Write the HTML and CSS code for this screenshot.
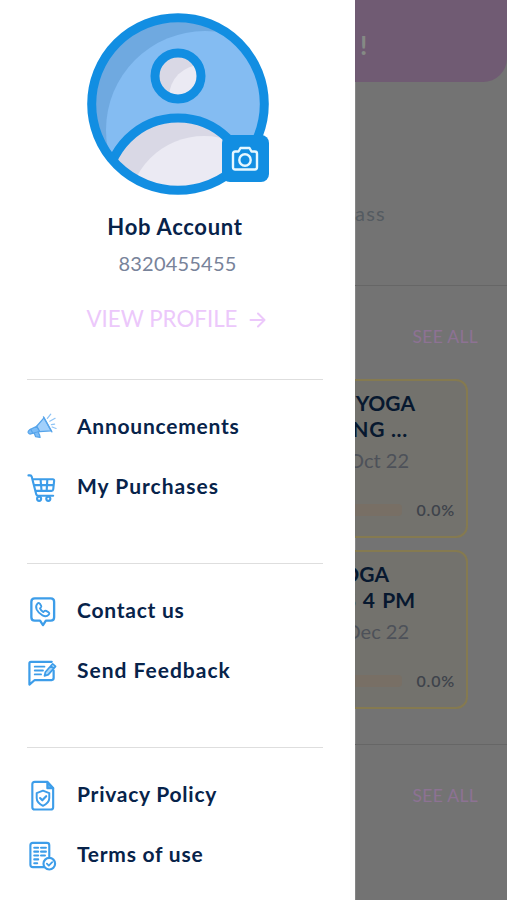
FILE: index.html
```html
<!DOCTYPE html>
<html lang="en">
<head>
<meta charset="utf-8">
<title>Account menu</title>
<link rel="stylesheet" href="styles.css">
</head>
<body>
<div class="screen">
  <aside class="drawer">
    <div class="avatar">
      <svg width="182" height="182" viewBox="0 0 182 182">
        <defs>
          <clipPath id="face"><circle cx="91" cy="91" r="88"/></clipPath>
          <clipPath id="head"><circle cx="91" cy="63" r="20"/></clipPath>
          <clipPath id="body"><circle cx="91" cy="176" r="71"/></clipPath>
        </defs>
        <g clip-path="url(#face)">
          <circle cx="91" cy="91" r="88" fill="#6fa9e0"/>
          <circle cx="118" cy="117" r="99" fill="#84bcf2"/>
          <circle cx="91" cy="176" r="71" fill="#d9d8e5"/>
          <circle cx="117" cy="199" r="76" fill="#ebeaf3" clip-path="url(#body)"/>
          <circle cx="91" cy="176" r="71" fill="none" stroke="#128ee2" stroke-width="9"/>
        </g>
        <circle cx="91" cy="63" r="22" fill="#d9d8e5"/>
        <circle cx="114" cy="84" r="32" fill="#ebeaf3" clip-path="url(#head)"/>
        <circle cx="91" cy="63" r="23" fill="none" stroke="#128ee2" stroke-width="9"/>
        <circle cx="91" cy="91" r="86.3" fill="none" stroke="#128ee2" stroke-width="9"/>
      </svg>
      <span class="camera">
        <svg width="28" height="26" viewBox="0 0 28 26" fill="none" stroke="#e6f7ff" stroke-width="2.400" stroke-linejoin="round">
          <path d="M4.200 5.500H7.500L9.500 2h9l2 3.500h3.300q2.200 0 2.200 2.200v13.600q0 2.200-2.200 2.200H4.200Q2 23.500 2 21.300V7.700Q2 5.500 4.200 5.500z"/>
          <circle cx="14" cy="14" r="5.700"/>
        </svg>
      </span>
    </div>
    <h1 class="name">Hob Account</h1>
    <p class="phone">8320455455</p>
    <a class="profile"><span>VIEW PROFILE</span>
      <svg width="17" height="16" viewBox="0 0 17 16" fill="none" stroke="#ecc8fb" stroke-width="2" stroke-linecap="round" stroke-linejoin="round"><path d="M1.500 8h14M9 1.500 15.500 8 9 14.500"/></svg>
    </a>
    <nav>
      <ul class="group">
        <li class="item">
          <svg class="icon" viewBox="0 0 32 32" fill="none" stroke="#56a4ea" stroke-width="1.300" stroke-linejoin="round" stroke-linecap="round">
            <path d="M17.500 6 25 19.500l-12 .7-3-5.500z" fill="#a2d0fb"/>
            <path d="m10 14.700-7.500 3.800q-2 1.500-1 3.200 1 1.600 3.200.7l8.300-2.200z" fill="#7bbcf7"/>
            <path d="m7.500 22 1.300 3.300 4.700 1-.5-2.500-1.500-3" fill="#7bbcf7"/>
            <path d="M17 5l8.700 15.500M4 18l2 4"/>
            <path d="m21 6.500 3.500-4.300M23.500 9.500l5.500-3M25.200 13l3.300-.5M26 15.500l4 1.500" stroke="#8fc4f6"/>
          </svg>
          <span>Announcements</span>
        </li>
        <li class="item">
          <svg class="icon" viewBox="0 0 32 32" fill="none" stroke="#3d9de9" stroke-width="2.200" stroke-linejoin="round" stroke-linecap="round">
            <path d="M1.500 3.500h1.700q1.300 0 1.700 1.500l4.600 18q.4 1.500 2 1.500H27M6 7.500h20.500q1.700 0 1.500 1.700l-.9 8.600q-.2 1.700-1.800 1.700H8.700M7 13.500h20.500M14 7.500l1 12M21 7.500l-.7 12"/>
            <circle cx="12.500" cy="27.700" r="2.100"/><circle cx="22" cy="27.700" r="2.100"/>
          </svg>
          <span class="loose">My Purchases</span>
        </li>
      </ul>
      <ul class="group">
        <li class="item">
          <svg class="icon" viewBox="0 0 32 32" fill="none" stroke="#3d9de9" stroke-width="2.400" stroke-linejoin="round">
            <path d="M8 2.500h16.500q3.500 0 3.500 3.500v16q0 3.500-3.500 3.500h-5L16.500 30l-3-4.500H8q-3.500 0-3.500-3.500V6q0-3.500 3.500-3.500z"/>
            <path d="M10.800 7.800q1.200-1.200 2.400 0l1.400 2.200q.6 1.100-.4 2l-.8.800q1 2.500 3.500 3.800l.9-.9q.9-.9 2-.3l2.600 1.500q1.200 1 .1 2.300-2.500 3-6.500.8-4.200-2.300-6.100-6.300-1.400-3.600.9-5.900z" stroke-width="1.900"/>
          </svg>
          <span>Contact us</span>
        </li>
        <li class="item">
          <svg class="icon" viewBox="0 0 32 32" fill="none" stroke="#3d9de9" stroke-width="2.300" stroke-linejoin="round" stroke-linecap="round">
            <path d="M25.500 6H4q-1.500 0-1.500 1.500v22l5.500-4.700h17.500q2 0 2-2V15"/>
            <path d="M8 11h10M8 15h8.500M8 19h6.500" stroke-width="1.900"/>
            <path d="m19 16.500 7.500-8.500 3 2.700-7.500 8.500-4 1.300zM24.500 10.300l3 2.700" stroke-width="1.700" fill="#a8d6fa"/>
          </svg>
          <span class="loose">Send Feedback</span>
        </li>
      </ul>
      <ul class="group">
        <li class="item">
          <svg class="icon" viewBox="0 0 32 32" fill="none" stroke="#3d9de9" stroke-width="2.200" stroke-linejoin="round" stroke-linecap="round">
            <path d="M8 2h13l6 6.500V28q0 2.500-2.500 2.500H8q-2.500 0-2.500-2.500V4.500Q5.500 2 8 2z"/><path d="M21 2v6.500h6z" fill="#5db0f0"/>
            <path d="m16.500 11 6.500 2.500v5.200q0 5-6.500 8-6.500-3-6.500-8v-5.200z" stroke-width="2"/><path d="m13.500 18.700 2.300 2.300 4-4.300"/>
          </svg>
          <span>Privacy Policy</span>
        </li>
        <li class="item">
          <svg class="icon" viewBox="0 0 32 32" fill="none" stroke="#3d9de9" stroke-width="2.200" stroke-linejoin="round" stroke-linecap="round">
            <path d="M17.500 28H6q-2.500 0-2.500-2.500v-20Q3.500 3 6 3h14.500Q23 3 23 5.500V17"/>
            <path d="M7.500 8h4M7.500 12h4M7.500 16h4M7.500 20h4M7.500 24h3M14.500 8h5M14.500 12h5M14.500 16h4"/>
            <circle cx="23" cy="24.500" r="6"/><path d="m20.500 24.500 2 2 3.500-3.700" stroke-width="1.800"/>
          </svg>
          <span>Terms of use</span>
        </li>
      </ul>
    </nav>
  </aside>
  <main class="behind">
    <header class="banner">!</header>
    <section class="intro">ass</section>
    <section class="list">
      <a class="see-all">SEE ALL</a>
      <article class="card">
        <h2 class="title"><span>YOGA</span><span class="wide">NG ...</span></h2>
        <p class="date">Oct 22</p>
        <div class="progress"><span class="bar"></span><span>0.0%</span></div>
      </article>
      <article class="card">
        <h2 class="title"><span class="short">YOGA</span><span class="spread">S 4 PM</span></h2>
        <p class="date">Dec 22</p>
        <div class="progress"><span class="bar"></span><span>0.0%</span></div>
      </article>
    </section>
    <section class="next"><a class="see-all">SEE ALL</a></section>
  </main>
</div>
</body>
</html>
```
FILE: styles.css
```css
* { box-sizing: border-box; }
body, h1, h2, p, ul { margin: 0; padding: 0; }
body { font-family: Lato, "Liberation Sans", sans-serif; background: #737373; }
.screen { display: grid; grid-template-columns: 355px 152px; height: 900px; overflow: hidden; }

.drawer { background: #fff; padding-top: 13px; display: flex; flex-direction: column; align-items: center; }
.avatar { position: relative; width: 182px; height: 182px; }
.avatar > svg { display: block; }
.camera { position: absolute; right: 0; bottom: 13px; width: 47px; height: 47px; border-radius: 8px; background: #128ee2; display: grid; place-items: center; }
.name { margin: 17px 5px 0 0; font-size: 22px; line-height: 30px; font-weight: 700; letter-spacing: .7px; color: #07234a; }
.phone { margin-top: 8px; font-size: 20px; line-height: 26px; letter-spacing: .2px; color: #78839a; }
.profile { display: flex; align-items: center; gap: 12px; margin: 26px 2px 0 0; font-size: 22.300px; line-height: 34px; color: #ecc8fb; }
.profile svg { margin-top: 2px; }
nav { width: 296px; margin: 43px 5px 0 0; }
.group { height: 184px; padding-top: 17px; border-top: 1px solid #dedede; list-style: none; }
.item { height: 60px; display: flex; align-items: center; gap: 19px; font-size: 21px; line-height: 26px; font-weight: 700; letter-spacing: .75px; color: #07234a; }
.item span { margin-top: -2px; }
.item .loose { letter-spacing: 1px; }
.icon { width: 31px; height: 31px; }

.behind { overflow: hidden; box-shadow: inset 1px 0 #858585; }
.banner { height: 82px; padding: 31px 0 0 5px; background: #705b73; border-bottom-right-radius: 24px; font-size: 26px; line-height: 28px; font-weight: 700; color: #858a85; }
.intro { height: 204px; padding-top: 118px; font-size: 20px; line-height: 26px; letter-spacing: 1.200px; color: #555b61; border-bottom: 1px solid #666; }
.list { height: 459px; border-bottom: 1px solid #666; }
.list, .next { display: flex; flex-direction: column; align-items: flex-end; }
.see-all { margin: 39px 29px 0 0; font-size: 17.500px; line-height: 24px; letter-spacing: .3px; color: #8d7293; }
.card { width: 300px; height: 159px; flex: none; margin: 30px 39px 0 0; padding: 9px 11px 0 0; border: 2px solid #857a50; border-radius: 12px; background: #73726d; }
.card + .card { margin-top: 12px; }
.title { display: flex; flex-direction: column; align-items: flex-end; padding-right: 40px; font-size: 21px; line-height: 26px; font-weight: 700; white-space: nowrap; color: #07182f; }
.wide { padding-right: 7px; letter-spacing: .7px; }
.short { padding-right: 26px; }
.spread { word-spacing: 2px; }
.date { margin-top: 4px; padding-right: 46px; text-align: right; font-size: 20px; line-height: 28px; color: #4d5159; }
.progress { display: flex; justify-content: flex-end; align-items: center; gap: 14px; margin-top: 26px; font-size: 16px; line-height: 20px; font-weight: 600; letter-spacing: .8px; color: #3e434b; }
.bar { width: 160px; height: 12px; border-radius: 4px; background: #786f65; }
```
